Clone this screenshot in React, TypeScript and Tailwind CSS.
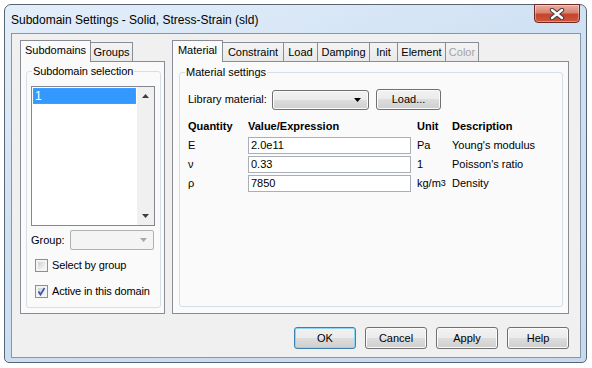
import React from 'react';

const btnBg = 'bg-[linear-gradient(#f2f2f2,#ebebeb_50%,#dddddd_50%,#cfcfcf)]';

function DownArrow({ color = '#000' }: { color?: string }) {
  return (
    <svg width="7" height="4" viewBox="0 0 7 4">
      <polygon points="0,0 7,0 3.5,4" fill={color} />
    </svg>
  );
}

function CloseButton() {
  return (
    <div className="-mt-px w-[46px] h-[19px] rounded-b-[4px] border border-[#6e2a22] bg-[linear-gradient(#eab0a4,#d9826f_45%,#c4442e_55%,#d0553c)] shadow-[inset_0_0_0_1px_rgba(255,255,255,0.35)] flex items-center justify-center">
      <svg width="16" height="12" viewBox="0 0 16 12">
        <path d="M3 2 L13 10 M13 2 L3 10" stroke="#3b3b3b" strokeWidth="4.4" strokeLinecap="round" />
        <path d="M3 2 L13 10 M13 2 L3 10" stroke="#ffffff" strokeWidth="2.4" strokeLinecap="round" />
      </svg>
    </div>
  );
}

function Checkbox({ checked, label }: { checked?: boolean; label: string }) {
  return (
    <div className="flex items-center h-[14px]">
      <div className="w-[13px] h-[13px] border border-[#8e8f8f] bg-[#f4f4f4] p-[2px]">
        <div className="w-full h-full bg-gradient-to-br from-[#cfd2d6] to-[#f7f7f7] relative">
          {checked && (
            <svg className="absolute -left-[2px] -top-[2px]" width="11" height="11" viewBox="0 0 11 11">
              <path d="M2.5 5.5 L4.5 8.5 L8.5 2" stroke="#3d5da5" strokeWidth="1.8" fill="none" />
            </svg>
          )}
        </div>
      </div>
      <span className="ml-[4px] leading-[13px] tracking-[-0.15px]">{label}</span>
    </div>
  );
}

function Tab({ label, active, disabled, className }: { label: string; active?: boolean; disabled?: boolean; className: string }) {
  if (active) {
    return (
      <div className={`relative z-10 -mb-px h-[22px] border border-b-0 border-[#898c95] bg-[#fafafa] flex items-center justify-center pb-[2px] ${className}`}>
        {label}
      </div>
    );
  }
  return (
    <div className={`-ml-px h-[19px] border border-b-0 border-[#898c95] bg-[linear-gradient(#f4f4f4,#e9e9e9)] flex items-center justify-center ${disabled ? 'text-[#a3a3a3]' : ''} ${className}`}>
      {label}
    </div>
  );
}

function Button({ label, primary }: { label: string; primary?: boolean }) {
  return (
    <div
      className={`w-[62px] h-[22px] rounded-[3px] border flex items-center justify-center ${btnBg} ${
        primary ? 'border-[#3c7fb1] shadow-[inset_0_0_0_1px_#8fd4f2]' : 'border-[#707070] shadow-[inset_0_0_0_1px_#fbfbfb]'
      }`}
    >
      {label}
    </div>
  );
}

export default function App() {
  const rows = [
    { q: 'E', v: '2.0e11', u: <>Pa</>, d: "Young's modulus" },
    { q: 'ν', v: '0.33', u: <>1</>, d: "Poisson's ratio" },
    { q: 'ρ', v: '7850', u: <>kg/m<sup className="text-[9px] relative -top-[1px]">3</sup></>, d: 'Density' },
  ];

  return (
    <div className="w-[592px] h-[368px] bg-white pl-[4px] pt-[4px] font-['Liberation_Sans',Arial,sans-serif] text-[11px] text-black">
      <div className="w-[583px] h-[359px] rounded-t-[7px] rounded-b-[5px] border border-[#5a6573] bg-[linear-gradient(160deg,#e3eef9,#d0e1f4_40%,#c6d9ef)] flex flex-col">
        {/* title bar */}
        <div className="h-[28px] flex items-start justify-between pl-[6px] pr-[6px]">
          <div className="pt-[8px] text-[12px] leading-[14px]">Subdomain Settings - Solid, Stress-Strain (sld)</div>
          <CloseButton />
        </div>

        {/* client */}
        <div className="ml-[6px] w-[570px] h-[325px] border border-[#8796a8] bg-[#f0f0f0] pt-[6px] pl-[8px] flex flex-col">
          <div className="flex gap-[7px] h-[274px]">
            {/* left */}
            <div className="w-[145px] flex flex-col">
              <div className="h-[21px] flex items-end">
                <Tab label="Subdomains" active className="w-[71px]" />
                <Tab label="Groups" className="w-[43px]" />
              </div>
              <div className="flex-1 border border-[#898c95] bg-[#fafafa] pl-[5px]">
                <fieldset className="mt-[3px] w-[135px] h-[243px] border border-[#d5dfe5] rounded-[3px] pl-[4px]">
                  <legend className="ml-[1px] px-[1px] leading-[13px] tracking-[-0.1px]">Subdomain selection</legend>
                  <div className="mt-[8px] w-[124px] h-[140px] border border-[#828790] bg-white flex">
                    <div className="flex-1 p-px">
                      <div className="h-[16px] bg-[#3399ff] text-white pl-[2px] leading-[16px] outline-1 outline-dotted outline-[#e0802a] -outline-offset-1 text-[12px]">1</div>
                    </div>
                    <div className="w-[17px] bg-[#f0f0f0] flex flex-col items-center justify-between py-[7px]">
                      <svg width="7" height="4" viewBox="0 0 7 4"><polygon points="3.5,0 7,4 0,4" fill="#404040" /></svg>
                      <DownArrow color="#404040" />
                    </div>
                  </div>
                  <div className="mt-[4px] w-[123px] flex items-center justify-between">
                    <span>Group:</span>
                    <div className="w-[84px] h-[20px] border border-[#adb2b5] rounded-[2px] bg-[#f4f4f4] flex items-center justify-end pr-[6px]">
                      <DownArrow color="#a8a8a8" />
                    </div>
                  </div>
                  <div className="mt-[8px] ml-[4px] flex flex-col gap-[12px]">
                    <Checkbox label="Select by group" />
                    <Checkbox label="Active in this domain" checked />
                  </div>
                </fieldset>
              </div>
            </div>

            {/* right */}
            <div className="w-[397px] flex flex-col">
              <div className="h-[21px] flex items-end">
                <Tab label="Material" active className="w-[51px]" />
                <Tab label="Constraint" className="w-[62px]" />
                <Tab label="Load" className="w-[35px]" />
                <Tab label="Damping" className="w-[53px]" />
                <Tab label="Init" className="w-[29px]" />
                <Tab label="Element" className="w-[49px]" />
                <Tab label="Color" disabled className="w-[34px]" />
              </div>
              <div className="flex-1 border border-[#898c95] bg-[#fafafa] pl-[6px]">
                <fieldset className="mt-[4px] w-[384px] h-[241px] border border-[#d5dfe5] rounded-[3px] pl-[8px]">
                  <legend className="-ml-[3px] px-[1px] leading-[13px]">Material settings</legend>
                  <div className="mt-[10px] flex items-center h-[21px]">
                    <span className="w-[84px]">Library material:</span>
                    <div className={`w-[97px] h-[20px] rounded-[3px] border border-[#707070] ${btnBg} shadow-[inset_0_0_0_1px_#fbfbfb] flex items-center justify-end pr-[7px]`}>
                      <DownArrow />
                    </div>
                    <div className={`ml-[7px] w-[65px] h-[21px] rounded-[3px] border border-[#707070] ${btnBg} shadow-[inset_0_0_0_1px_#fbfbfb] flex items-center justify-center`}>
                      Load...
                    </div>
                  </div>

                  <div className="mt-[9px] grid grid-cols-[60px_169px_35px_1fr] items-center gap-y-[2px]">
                    <div className="font-bold h-[14px] leading-[14px] mb-[2px]">Quantity</div>
                    <div className="font-bold h-[14px] leading-[14px] mb-[2px]">Value/Expression</div>
                    <div className="font-bold h-[14px] leading-[14px] mb-[2px]">Unit</div>
                    <div className="font-bold h-[14px] leading-[14px] mb-[2px]">Description</div>
                    {rows.map((r) => (
                      <React.Fragment key={r.q}>
                        <div>{r.q}</div>
                        <div className="w-[163px] h-[17px] border border-[#a9afb8] bg-white pl-[2px] leading-[15px]">{r.v}</div>
                        <div>{r.u}</div>
                        <div>{r.d}</div>
                      </React.Fragment>
                    ))}
                  </div>
                </fieldset>
              </div>
            </div>
          </div>

          {/* buttons */}
          <div className="mt-[13px] pr-[11px] flex justify-end gap-[9px]">
            <Button label="OK" primary />
            <Button label="Cancel" />
            <Button label="Apply" />
            <Button label="Help" />
          </div>
        </div>
      </div>
    </div>
  );
}
